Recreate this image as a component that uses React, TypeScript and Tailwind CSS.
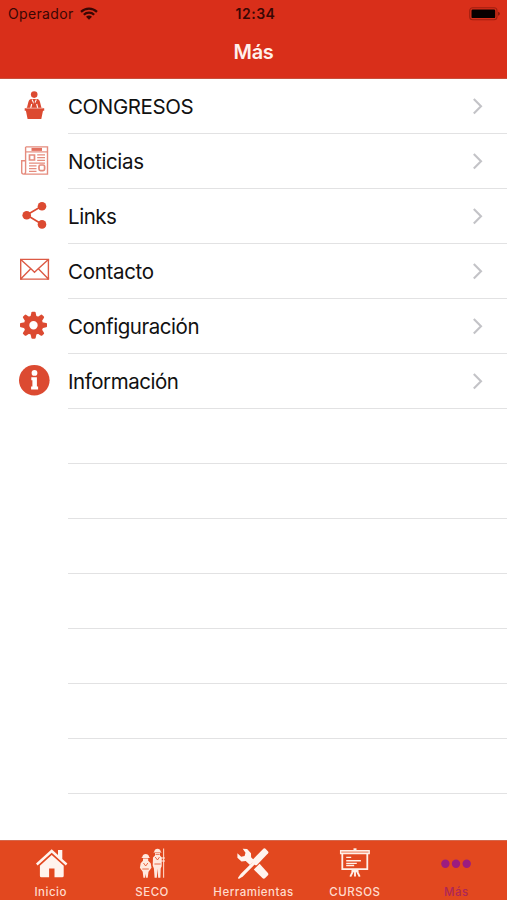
import type { ReactNode } from 'react';
import { clsx } from 'clsx';

interface MenuItem {
  label: string;
  icon: ReactNode;
  spacing: string;
}

interface TabItem {
  label: string;
  icon: ReactNode;
  active?: boolean;
}

const GEAR_ANGLES = [0, 45, 90, 135, 180, 225, 270, 315];
const EMPTY_ROWS = 7;

function SpeakerIcon() {
  return (
    <g fill="#dc4a31">
      <circle cx="34.2" cy="15.6" r="3.3" />
      <path d="M31 20h6.4c1.6.4 2.2 1.5 2.6 3l1.5 6H26.9l1.5-6c.4-1.5 1-2.6 2.6-3Z" />
      <path d="M24.7 29.2h19.5v2.6H43l-1.7 8.2H27.6l-1.7-8.2h-1.2Z" />
      <path d="M32 20.5 34.2 25l2.2-4.5M30.7 29l1-4M37.7 29l-1-4" fill="none" stroke="#fff" strokeWidth="1.1" />
      <path d="m34.2 21.5 1.2 4.5-1.2 2.2-1.2-2.2Z" />
      <path d="M26 29h17" stroke="#f4b9ae" strokeWidth=".6" />
    </g>
  );
}

function NewspaperIcon() {
  return (
    <g fill="none" stroke="#e58c7e" strokeWidth="1.4">
      <path d="M25.6 12.9h21.9v27.2H23.7c-1.5 0-2-.8-2-2V26.7h3.9v11c0 1.500-.6 2.400-1.900 2.400M25.600 12.900v14" />
      <path d="M25.600 17.900h21.900" strokeWidth="1.200" />
      <path d="M31.500 15.400h10.500" stroke="#e2705f" strokeWidth="3" />
      <path d="M29.500 21h5v5h-5Z" strokeWidth="1.700" />
      <rect x="39" y="31" width="5.600" height="5.600" rx="1.500" strokeWidth="1.700" />
      <path d="M37.200 20.800H45M37.200 23.600H45M37.200 26.400H45M29 29.200h16M29 31.900h7.500M29 34.600h7.500M29 37.300h7.500" strokeWidth="1.200" />
    </g>
  );
}

function ShareIcon() {
  return (
    <g fill="#dc4a31">
      <path d="M42 17 26.700 26 42 35.300" fill="none" stroke="#dc4a31" strokeWidth="1.700" />
      <circle cx="42" cy="17.200" r="4.300" />
      <circle cx="26.700" cy="26.300" r="4.300" />
      <circle cx="42" cy="35.400" r="4.300" />
    </g>
  );
}

function MailIcon() {
  return (
    <g fill="none" stroke="#dc5a45" strokeWidth="1.400">
      <path d="M20.700 15.400h27.700v19.700H20.700Z" />
      <path d="m20.700 15.400 10.500 9.600 3.300 3.300 3.400-3.300 10.500-9.600M20.700 35.100l9.800-10M48.400 35.100l-9.800-10" />
      <path d="M20 16h2.200M46.900 16h2.200M20 34.500h2.200M46.900 34.500h2.200" strokeWidth="2.200" />
    </g>
  );
}

function GearIcon() {
  return (
    <g fill="#dc4a31">
      {GEAR_ANGLES.map((angle) => (
        <path
          key={angle}
          d="m30.500 17.500.9-4q.2-.8 1-.8h2.200q.8 0 1 .8l.9 4Z"
          transform={`rotate(${angle} 33.500 26.200)`}
        />
      ))}
      <circle cx="33.500" cy="26.200" r="7" fill="none" stroke="#dc4a31" strokeWidth="5.600" />
    </g>
  );
}

function InfoIcon() {
  return (
    <g>
      <circle cx="34.300" cy="26.200" r="15.300" fill="#dc4a31" />
      <circle cx="34.500" cy="18.900" r="2.900" fill="#fff" />
      <path d="M31.300 23.200h5.600v9.200h1.200v3.100h-7v-3.100h1.300v-6.200h-1.100Z" fill="#fff" />
    </g>
  );
}

function HouseIcon() {
  return (
    <g fill="#fff4ee">
      <path d="m22.700 6.200 6.300 5.700V7h4.300v8.900l5.100 4.700-1.600 1.800-14.100-12.600L8.600 22.400 7 20.600Z" />
      <path d="m22.700 12.100 12 10.700v10q0 1.500-1.500 1.500h-7.700v-8.800h-5.400v8.800h-7.700q-1.500 0-1.500-1.500v-10Z" />
    </g>
  );
}

function FiguresIcon() {
  return (
    <g fill="#ffe9df">
      <path d="M12.200 14.200q.6-3.200 3.500-3.200t3.500 3.200l1 .7h-9Z" />
      <path d="M13 15.500h5.200v2.300l2.500 2.400.8 4.500-3 4-.8 6.100h-1.600l-.5-4-.5 4h-1.700l-.7-6.100-2.800-4 .8-4.500 2.300-2.400Z" />
      <path d="M24.200 8.700q.5-3 3.300-3t3.300 3l1 .7h-8.500Z" />
      <path d="M25 10h5v2.500l1.700 1.900v8.900l-1 2.200-.3 9.300h-2.200l-.7-9-.7 9h-2.200l-.7-9.300-1.200-3 .3-8.100 2-1.900Z" />
      <path d="M33.600 5.500v29.300" stroke="#ffd4c2" strokeWidth="1.100" />
      <path d="M30 18h5M31 15h4" stroke="#ffe9df" strokeWidth="1.100" />
      <path d="m13.500 20 2.200 3 2.100-3M12.300 26h6.500M25.200 14l2.300 3 2-3M24.400 21h6.300M25.500 11.300h4.200" fill="none" stroke="#e2481f" strokeWidth=".8" />
    </g>
  );
}

function ToolsIcon() {
  return (
    <g fill="#fff4ee">
      <path d="m11.700 5.700 4.400.2 3.900 4.300.1 4.100 3.300 3.200-4.400 4.600-4.300-4.100-4.200.4-4.100-3.600v-4.600l3.800 3.600 3.400-.7.900-3.300Z" />
      <path d="m28.600 20.700 8.100 9q1.300 1.500 0 2.900l-2.500 2.500q-1.400 1.300-2.800 0l-8.600-8.600Z" />
      <path d="M32.600 5.500q1-.6 1.900.2l2.600 2.700q.8.900 0 1.900L26.200 21.700q-1.200 1.200-2.500 0l-2.300-2.300q-1.200-1.200 0-2.500Z" />
      <path d="m22 18.800 2.200 2.200-12.400 12.400-4 2.600-.9-.9 2.700-4Z" />
    </g>
  );
}

function BoardIcon() {
  return (
    <g fill="none" stroke="#fff0e8" strokeWidth="1.600">
      <path d="M22 5.300v2" strokeWidth="3" />
      <path d="M7.600 7.700h28.600v3H7.600Z" strokeWidth="1.300" fill="#f4ad95" />
      <path d="M9.300 10.800v15.300h25V10.800" strokeWidth="1.800" />
      <path d="M13.200 14.400h5M13.200 17.700h14.700M13.200 20.400h10.600M13.200 22.500h8" strokeWidth="1.400" />
      <path d="M22 26v7.500M20.500 27.300l-3.200 6.300M23.500 27.300l3.200 6.300" strokeWidth="1.900" />
      <path d="M18.500 28h7" strokeWidth="2" />
    </g>
  );
}

function MoreIcon() {
  return (
    <g fill="#9b1c80">
      <circle cx="11.400" cy="20.800" r="4.200" />
      <circle cx="22" cy="20.800" r="4.200" />
      <circle cx="32.700" cy="20.800" r="4.200" />
    </g>
  );
}

const MENU: MenuItem[] = [
  { label: 'CONGRESOS', icon: <SpeakerIcon />, spacing: 'tracking-[-0.4px]' },
  { label: 'Noticias', icon: <NewspaperIcon />, spacing: 'tracking-[-0.35px]' },
  { label: 'Links', icon: <ShareIcon />, spacing: 'tracking-[-0.45px]' },
  { label: 'Contacto', icon: <MailIcon />, spacing: 'tracking-[-0.3px]' },
  { label: 'Configuración', icon: <GearIcon />, spacing: 'tracking-[-0.45px]' },
  { label: 'Información', icon: <InfoIcon />, spacing: 'tracking-[-0.45px]' },
];

const TABS: TabItem[] = [
  { label: 'Inicio', icon: <HouseIcon /> },
  { label: 'SECO', icon: <FiguresIcon /> },
  { label: 'Herramientas', icon: <ToolsIcon /> },
  { label: 'CURSOS', icon: <BoardIcon /> },
  { label: 'Más', icon: <MoreIcon />, active: true },
];

function StatusBar() {
  return (
    <div className="grid h-[27px] grid-cols-3 items-center text-[#390704]">
      <div className="flex items-center gap-[6px] pl-2">
        <span className="pt-px text-[14px] leading-none tracking-[0.35px]">Operador</span>
        <svg className="h-[13px] w-[18px]" viewBox="0 0 18 13">
          <path d="M1 4.900a11.500 11.500 0 0 1 16 0M3.800 7.700a7.500 7.500 0 0 1 10.400 0" fill="none" stroke="currentColor" strokeWidth="2.200" />
          <path d="M6 9.800a4.500 4.500 0 0 1 6 0l-3 3Z" fill="currentColor" />
        </svg>
      </div>
      <span className="pt-px pl-1 text-center text-[14px] leading-none font-semibold tracking-[0.5px]">12:34</span>
      <div className="flex justify-end pr-1.5">
        <svg className="h-[14px] w-[33px]" viewBox="0 0 33 14">
          <rect x="1.700" y=".8" width="27.300" height="12" rx="3" fill="none" stroke="#a01f10" strokeWidth="1.100" />
          <rect x="3.500" y="2.500" width="23.700" height="8.600" rx="1.200" fill="#080000" />
          <path d="M30.200 4.700q1.600.5 1.600 2t-1.600 2Z" fill="#7c160c" />
        </svg>
      </div>
    </div>
  );
}

function MenuRow({ label, icon, spacing }: MenuItem) {
  return (
    <li className="flex h-[55px]">
      <svg className="h-[55px] w-[68px] shrink-0" viewBox="0 0 68 55">
        {icon}
      </svg>
      <div className="flex grow items-center justify-between border-b border-[#e2e2e3] pr-[23px]">
        <span className={clsx('pt-0.5 text-[20.5px] leading-none text-[#111]', spacing)}>{label}</span>
        <svg className="h-[18px] w-[12px]" viewBox="0 0 12 18">
          <path d="m1.800 2 7.200 7.200-7.200 7.200" fill="none" stroke="#c3c3c7" strokeWidth="2.100" />
        </svg>
      </div>
    </li>
  );
}

function TabButton({ label, icon, active }: TabItem) {
  return (
    <button className="flex flex-col items-center pt-0.5">
      <svg className="h-[42px] w-[44px]" viewBox="0 0 44 42">
        {icon}
      </svg>
      <span
        className={clsx(
          'text-[11.5px] leading-[14px] font-medium tracking-[0.5px]',
          active ? 'text-[#ad2658]' : 'text-[#ffdccd]',
        )}
      >
        {label}
      </span>
    </button>
  );
}

export default function App() {
  return (
    <div className="flex h-[900px] w-[507px] flex-col overflow-hidden bg-white font-[Inter,sans-serif]">
      <header className="h-[79px] border-b border-[#c9503c] bg-[#d92f1a]">
        <StatusBar />
        <h1 className="text-center text-[20px] leading-[51px] font-semibold tracking-[-0.3px] text-[#fff0ec]">Más</h1>
      </header>
      <ul className="grow">
        {MENU.map((item) => (
          <MenuRow key={item.label} {...item} />
        ))}
        {Array.from({ length: EMPTY_ROWS }, (_, i) => (
          <li key={i} className="ml-[68px] h-[55px] border-b border-[#e2e2e3]" />
        ))}
      </ul>
      <nav className="grid h-[60px] shrink-0 grid-cols-5 border-t border-[#d5674c] bg-[#e2481f]">
        {TABS.map((tab) => (
          <TabButton key={tab.label} {...tab} />
        ))}
      </nav>
    </div>
  );
}
